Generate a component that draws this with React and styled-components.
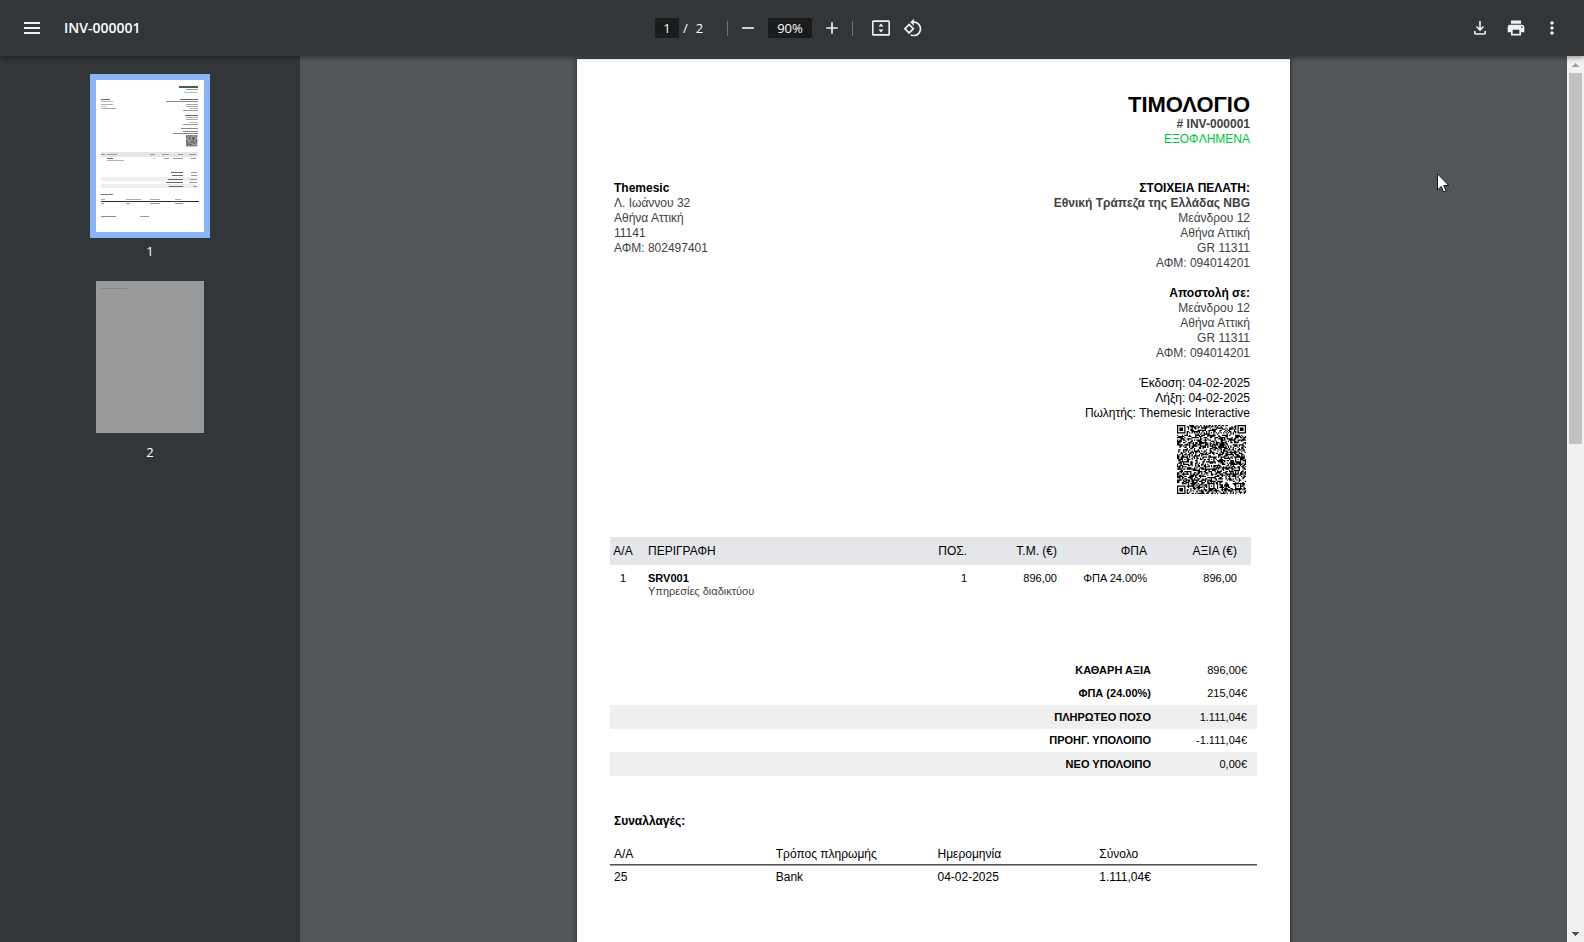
import React from "react";
import styled, { createGlobalStyle } from "styled-components";
import { MdAdd, MdRemove, MdPrint, MdMoreVert, MdRotate90DegreesCcw } from "react-icons/md";

const customer = ["Μεάνδρου 12", "Αθήνα Αττική", "GR 11311", "ΑΦΜ: 094014201"];

const totals = [
    { label: "ΚΑΘΑΡΗ ΑΞΙΑ", value: "896,00€" },
    { label: "ΦΠΑ (24.00%)", value: "215,04€" },
    { label: "ΠΛΗΡΩΤΕΟ ΠΟΣΟ", value: "1.111,04€", shaded: true },
    { label: "ΠΡΟΗΓ. ΥΠΟΛΟΙΠΟ", value: "-1.111,04€" },
    { label: "ΝΕΟ ΥΠΟΛΟΙΠΟ", value: "0,00€", shaded: true },
];

const QR_SIZE = 57;

function inSquare(x, y, left, top, size) {
    return x >= left && x < left + size && y >= top && y < top + size;
}

// ring distance from the centre: finder patterns are dark at 0, 1 and 3
function ring(x, y, cx, cy) {
    return Math.max(Math.abs(x - cx), Math.abs(y - cy));
}

function buildQr() {
    const last = QR_SIZE - 4;
    const finders = [[3, 3], [last, 3], [3, last]];
    const aligns = [[28, 6], [6, 28], [28, 28], [50, 28], [28, 50], [50, 50]];
    let seed = 20250204;
    let d = "";
    for (let y = 0; y < QR_SIZE; y++) {
        for (let x = 0; x < QR_SIZE; x++) {
            seed = (seed * 1103515245 + 12345) % 2147483648;
            let dark = seed / 2147483648 > 0.48;
            if (y === 6) dark = x % 2 === 0;
            if (x === 6) dark = y % 2 === 0;
            aligns.forEach(([cx, cy]) => {
                if (inSquare(x, y, cx - 2, cy - 2, 5)) dark = ring(x, y, cx, cy) !== 1;
            });
            finders.forEach(([cx, cy]) => {
                const r = ring(x, y, cx, cy);
                if (r <= 4) dark = r < 2 || r === 3;
            });
            if (dark) d += `M${x} ${y}h1v1h-1z`;
        }
    }
    return d;
}

const qrPath = buildQr();

// x, y, width, height, colour of every line of the small preview
const previewLines = [
    [83, 6, 19, 2, "#555"], [90, 9, 12, 1, "#999"], [88, 12, 14, 1, "#7fdc9b"],
    [5, 19, 9, 1, "#666"], [5, 21, 12, 1, "#b5b5b5"], [5, 24, 12, 1, "#b0b0b0"], [5, 26, 6, 1, "#c4c4c4"], [5, 28, 15, 1, "#a5a5a5"],
    [84, 19, 18, 1, "#666"], [70, 21, 32, 1, "#888"], [90, 24, 12, 1, "#aaa"], [90, 26, 12, 1, "#aaa"], [93, 28, 9, 1, "#bbb"], [87, 30, 15, 1, "#999"],
    [89, 35, 13, 1, "#666"], [90, 37, 12, 1, "#aaa"], [90, 39, 12, 1, "#aaa"], [93, 42, 9, 1, "#bbb"], [87, 44, 15, 1, "#999"],
    [85, 48, 17, 1, "#888"], [87, 51, 15, 1, "#888"], [77, 53, 25, 1, "#888"],
    [5, 72, 97, 5, "#e4e6ea"], [5, 74, 4, 1, "#999"], [11, 74, 10, 1, "#999"], [54, 74, 5, 1, "#999"], [66, 74, 7, 1, "#999"], [82, 74, 5, 1, "#999"], [93, 74, 7, 1, "#999"],
    [11, 78, 6, 1, "#666"], [11, 80, 17, 1, "#b0b0b0"], [58, 78, 1, 1, "#999"], [68, 78, 5, 1, "#999"], [77, 78, 10, 1, "#999"], [95, 78, 5, 1, "#999"],
    [5, 97, 97, 4, "#efefef"], [5, 104, 97, 4, "#efefef"],
    [75, 92, 12, 1, "#666"], [95, 92, 6, 1, "#999"], [76, 95, 11, 1, "#666"], [95, 95, 6, 1, "#999"],
    [72, 99, 15, 1, "#666"], [94, 99, 7, 1, "#999"], [70, 102, 17, 1, "#666"], [93, 102, 8, 1, "#999"], [73, 106, 14, 1, "#666"], [97, 106, 4, 1, "#999"],
    [5, 114, 12, 1, "#777"], [5, 119, 4, 1, "#aaa"], [30, 119, 15, 1, "#aaa"], [54, 119, 10, 1, "#aaa"], [79, 119, 6, 1, "#aaa"],
    [5, 121, 98, 1, "#2b2b2b"], [5, 123, 3, 1, "#999"], [30, 123, 4, 1, "#999"], [54, 123, 10, 1, "#999"], [79, 123, 8, 1, "#999"],
    [5, 136, 15, 1, "#888"], [44, 136, 9, 1, "#999"],
];

function QrCode() {
    return (
        <QrImage viewBox={`0 0 ${QR_SIZE} ${QR_SIZE}`} aria-hidden="true">
            <path d={qrPath} fill="#000" />
        </QrImage>
    );
}

function FirstPreview() {
    return (
        <svg viewBox="0 0 108 152" width="100%" aria-hidden="true">
            <g shapeRendering="crispEdges">
                {previewLines.map(([x, y, w, h, fill], i) => (
                    <rect key={i} x={x} y={y} width={w} height={h} fill={fill} />
                ))}
            </g>
            <g transform="translate(90 55) scale(0.2)">
                <path d={qrPath} fill="#111" />
            </g>
        </svg>
    );
}

function Toolbar() {
    return (
        <Bar>
            <BarSide>
                <IconButton aria-label="Menu">
                    <svg width="16" height="12" fill="currentColor">
                        <path d="M0 0h16v2H0zM0 5h16v2H0zM0 10h16v2H0z" />
                    </svg>
                </IconButton>
                <Title>INV-000001</Title>
            </BarSide>
            <BarCenter>
                <BarInput $width={24} defaultValue="1" aria-label="Page number" />
                <PageCount><span>/</span><span>2</span></PageCount>
                <Divider />
                <IconButton aria-label="Zoom out"><MdRemove size={20} /></IconButton>
                <BarInput $width={44} defaultValue="90%" aria-label="Zoom level" />
                <IconButton aria-label="Zoom in"><MdAdd size={20} /></IconButton>
                <Divider />
                <ViewButtons>
                    <IconButton aria-label="Fit to page">
                        <svg width="18" height="16" fill="currentColor">
                            <path fillRule="evenodd" d="M1.500 0.300h15A1.500 1.500 0 0 1 18 1.800v12.400a1.500 1.500 0 0 1-1.500 1.500h-15A1.500 1.500 0 0 1 0 14.200V1.800A1.500 1.500 0 0 1 1.500.3zM1.600 1.900v12.200h14.800V1.900z" />
                            <path d="M9 3.500 11.500 6.500h-5zM9 12.500 6.500 9.500h5z" />
                        </svg>
                    </IconButton>
                    <IconButton aria-label="Rotate"><MdRotate90DegreesCcw size={20} /></IconButton>
                </ViewButtons>
            </BarCenter>
            <BarSide $end>
                <IconButton aria-label="Download">
                    <svg width="12" height="14" fill="none" stroke="currentColor" strokeWidth="1.6">
                        <path d="M6 0v9M2.500 5.500 6 9l3.500-3.500" />
                        <path d="M.8 10v2q0 1 1 1h8.400q1 0 1-1v-2" />
                    </svg>
                </IconButton>
                <IconButton aria-label="Print"><MdPrint size={20} /></IconButton>
                <IconButton aria-label="More"><MdMoreVert size={20} /></IconButton>
            </BarSide>
        </Bar>
    );
}

function Invoice() {
    return (
        <Paper>
            <Heading>
                <h1>ΤΙΜΟΛΟΓΙΟ</h1>
                <Line $bold>&#35; INV-000001</Line>
                <Line $color="#00c53c">ΕΞΟΦΛΗΜΕΝΑ</Line>
            </Heading>
            <Parties>
                <div>
                    <Line $bold $color="#000">Themesic</Line>
                    <Line>Λ. Ιωάννου 32</Line>
                    <Line>Αθήνα Αττική</Line>
                    <Line>11141</Line>
                    <Line>ΑΦΜ: 802497401</Line>
                </div>
                <Client>
                    <Group>
                        <Line $bold $color="#000">ΣΤΟΙΧΕΙΑ ΠΕΛΑΤΗ:</Line>
                        <Line $bold>Εθνική Τράπεζα της Ελλάδας NBG</Line>
                        {customer.map((line) => <Line key={line}>{line}</Line>)}
                    </Group>
                    <Group>
                        <Line $bold $color="#000">Αποστολή σε:</Line>
                        {customer.map((line) => <Line key={line}>{line}</Line>)}
                    </Group>
                    <Group>
                        <Line $color="#000">Έκδοση: 04-02-2025</Line>
                        <Line $color="#000">Λήξη: 04-02-2025</Line>
                        <Line $color="#000">Πωλητής: Themesic Interactive</Line>
                    </Group>
                    <QrCode />
                </Client>
            </Parties>
            <Items>
                <thead>
                    <tr>
                        <th>Α/Α</th>
                        <th>ΠΕΡΙΓΡΑΦΗ</th>
                        <th>ΠΟΣ.</th>
                        <th>Τ.Μ. (€)</th>
                        <th>ΦΠΑ</th>
                        <th>ΑΞΙΑ (€)</th>
                    </tr>
                </thead>
                <tbody>
                    <tr>
                        <td>1</td>
                        <td>
                            <ItemName>SRV001</ItemName>
                            <ItemNote>Υπηρεσίες διαδικτύου</ItemNote>
                        </td>
                        <td>1</td>
                        <td>896,00</td>
                        <td>ΦΠΑ 24.00%</td>
                        <td>896,00</td>
                    </tr>
                </tbody>
            </Items>
            <Totals>
                <tbody>
                    {totals.map((row) => (
                        <TotalRow key={row.label} $shaded={row.shaded}>
                            <th>{row.label}</th>
                            <td>{row.value}</td>
                        </TotalRow>
                    ))}
                </tbody>
            </Totals>
            <SectionTitle>Συναλλαγές:</SectionTitle>
            <Payments>
                <thead>
                    <tr>
                        <th>Α/Α</th>
                        <th>Τρόπος πληρωμής</th>
                        <th>Ημερομηνία</th>
                        <th>Σύνολο</th>
                    </tr>
                </thead>
                <tbody>
                    <tr>
                        <td>25</td>
                        <td>Bank</td>
                        <td>04-02-2025</td>
                        <td>1.111,04€</td>
                    </tr>
                </tbody>
            </Payments>
        </Paper>
    );
}

function App() {
    return (
        <Screen>
            <GlobalStyle />
            <Toolbar />
            <Body>
                <Sidebar>
                    <Thumb>
                        <Preview $active><FirstPreview /></Preview>
                        <ThumbLabel>1</ThumbLabel>
                    </Thumb>
                    <Thumb>
                        <Preview>
                            <svg viewBox="0 0 108 152" width="100%" aria-hidden="true">
                                <path d="M5 7h26v1H5z" fill="#858687" />
                            </svg>
                        </Preview>
                        <ThumbLabel>2</ThumbLabel>
                    </Thumb>
                </Sidebar>
                <Viewer>
                    <Invoice />
                </Viewer>
                <ScrollBar>
                    <ScrollButton aria-label="Scroll up">
                        <svg width="7" height="4"><path d="M3 0h1v1h1v1h1v1h1v1H0V3h1V2h1V1h1z" fill="#a3a3a3" /></svg>
                    </ScrollButton>
                    <ScrollTrack><ScrollThumb /></ScrollTrack>
                    <ScrollButton aria-label="Scroll down">
                        <svg width="7" height="4"><path d="M0 0h7v1H6v1H5v1H4v1H3V3H2V2H1V1H0z" fill="#505050" /></svg>
                    </ScrollButton>
                </ScrollBar>
            </Body>
            <Cursor width="13" height="20" viewBox="0 0 13 20" aria-hidden="true">
                <path d="M.5.8v16.200l3.700-3.500 2.400 5.500 2.500-1-2.400-5.500h5.100z" fill="#fff" stroke="#14141e" />
            </Cursor>
        </Screen>
    );
}

const GlobalStyle = createGlobalStyle`
    * {
        box-sizing: border-box;
    }
    body {
        margin: 0;
        overflow: hidden;
    }
`;
const Screen = styled.div`
    display: flex;
    flex-direction: column;
    height: 100vh;
    font-family: "Open Sans", "Noto Sans", sans-serif;
    background: #525659;
`;
const Bar = styled.header`
    display: flex;
    align-items: center;
    flex-shrink: 0;
    height: 56px;
    padding: 0 16px;
    position: relative;
    z-index: 1;
    background: #323639;
    color: #f1f1f1;
    box-shadow: 0 2px 4px rgba(0, 0, 0, 0.25), 0 1px 6px rgba(0, 0, 0, 0.15);
`;
const BarSide = styled.div`
    display: flex;
    align-items: center;
    flex: 1;
    gap: ${(props) => (props.$end ? "4px" : "16px")};
    justify-content: ${(props) => (props.$end ? "flex-end" : "flex-start")};
`;
const BarCenter = styled.div`
    display: flex;
    align-items: center;
    gap: 4px;
`;
const IconButton = styled.button`
    display: flex;
    align-items: center;
    justify-content: center;
    width: 32px;
    height: 32px;
    padding: 0;
    border: 0;
    background: none;
    color: inherit;
`;
const Title = styled.span`
    font-size: 14px;
    font-weight: 600;
    line-height: 20px;
    color: #fff;
`;
const BarInput = styled.input`
    width: ${(props) => props.$width}px;
    height: 20px;
    padding: 0;
    border: 0;
    background: #191b1c;
    color: #fff;
    font-family: inherit;
    font-size: 13px;
    text-align: center;
    outline: none;
`;
const PageCount = styled.span`
    display: flex;
    gap: 8px;
    width: 40px;
    font-size: 13px;
    color: #fff;
`;
const Divider = styled.span`
    width: 1px;
    height: 15px;
    background: #6f7274;
`;
const ViewButtons = styled.div`
    display: flex;
    margin-left: 8px;
`;
const Body = styled.div`
    display: flex;
    flex: 1;
    min-height: 0;
`;
const Sidebar = styled.aside`
    width: 300px;
    flex-shrink: 0;
    padding-top: 18px;
    background: #323639;
`;
const Thumb = styled.div`
    display: flex;
    flex-direction: column;
    align-items: center;
    margin-bottom: 14px;
`;
const Preview = styled.div`
    width: 120px;
    height: 164px;
    border: 6px solid ${(props) => (props.$active ? "#8ab4f8" : "#323639")};
    background: ${(props) => (props.$active ? "#fff" : "#999a9b")};
    svg {
        display: block;
    }
`;
const ThumbLabel = styled.div`
    margin-top: 3px;
    font-size: 13px;
    line-height: 20px;
    color: #fff;
`;
const Viewer = styled.main`
    display: flex;
    justify-content: center;
    flex: 1;
    min-width: 0;
    padding-top: 3px;
    overflow: hidden;
`;
const Paper = styled.article`
    width: 713px;
    max-width: 100%;
    min-height: 1009px;
    flex-shrink: 0;
    padding: 34px 33px;
    background: #fff;
    color: #000;
    font-family: "Liberation Sans", Arial, sans-serif;
    font-size: 12px;
    line-height: 15px;
    box-shadow: 0 0 5px rgba(0, 0, 0, 0.6);
    table {
        width: 100%;
        border-spacing: 0;
        table-layout: fixed;
    }
    th {
        font-weight: normal;
    }
`;
const Heading = styled.div`
    padding-right: 7px;
    text-align: right;
    h1 {
        margin: 0;
        font-size: 22px;
        line-height: 24px;
    }
`;
const Line = styled.p`
    margin: 0;
    font-weight: ${(props) => (props.$bold ? "bold" : "normal")};
    color: ${(props) => props.$color || "#424242"};
`;
const Parties = styled.div`
    display: flex;
    justify-content: space-between;
    margin-top: 34px;
    padding: 0 7px 0 4px;
`;
const Client = styled.div`
    display: flex;
    flex-direction: column;
    text-align: right;
`;
const Group = styled.div`
    & + & {
        margin-top: 15px;
    }
`;
const QrImage = styled.svg`
    align-self: flex-end;
    width: 69px;
    height: 69px;
    margin: 4px 4px 0 0;
`;
const Items = styled.table`
    margin-top: 43px;
    padding-right: 6px;
    th, td {
        width: 90px;
        padding: 0 14px 0 0;
        text-align: right;
        white-space: nowrap;
    }
    th {
        height: 28px;
        background: #e4e6ea;
    }
    td {
        padding-top: 7px;
        font-size: 11px;
        line-height: 13px;
        vertical-align: top;
    }
    th:first-child, td:first-child {
        width: 26px;
        padding-right: 0;
        text-align: center;
    }
    th:nth-child(2), td:nth-child(2) {
        width: auto;
        padding-left: 12px;
        text-align: left;
    }
`;
const ItemName = styled.div`
    font-weight: bold;
`;
const ItemNote = styled.div`
    color: #424242;
`;
const Totals = styled.table`
    margin-top: 61px;
    font-size: 11px;
    text-align: right;
    th, td {
        padding: 0 10px 0 0;
    }
    th {
        font-weight: bold;
        text-align: right;
    }
    td {
        width: 96px;
    }
`;
const TotalRow = styled.tr`
    height: ${(props) => (props.$shaded ? "24px" : "23px")};
    background: ${(props) => (props.$shaded ? "#efefef" : "none")};
`;
const SectionTitle = styled.h2`
    margin: 38px 0 18px;
    padding-left: 4px;
    font-size: 12px;
    line-height: 15px;
`;
const Payments = styled.table`
    th, td {
        padding: 0 4px;
        text-align: left;
    }
    th {
        padding-bottom: 2px;
        border-bottom: 1px solid #4f4f4f;
    }
    td {
        padding-top: 4px;
        border-top: 1px solid #a0a0a0;
    }
`;
const ScrollBar = styled.div`
    display: flex;
    flex-direction: column;
    width: 17px;
    flex-shrink: 0;
    background: #f1f1f1;
`;
const ScrollButton = styled.button`
    display: flex;
    align-items: center;
    justify-content: center;
    height: 17px;
    padding: 0;
    border: 0;
    background: none;
`;
const ScrollTrack = styled.div`
    flex: 1;
    padding: 0 2px;
`;
const ScrollThumb = styled.div`
    height: 43.5%;
    background: #c1c1c1;
`;
const Cursor = styled.svg`
    position: absolute;
    left: 1437px;
    top: 173px;
    z-index: 2;
`;

export default App;
